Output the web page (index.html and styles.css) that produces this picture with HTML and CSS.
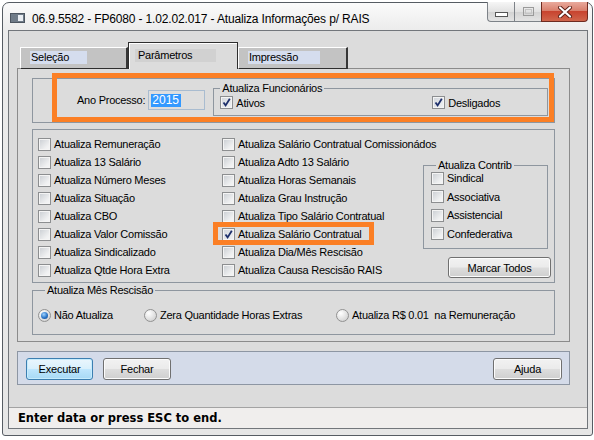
FILE: index.html
```html
<!DOCTYPE html>
<html lang="pt">
	<head>
		<meta charset="UTF-8">
		<title>Atualiza Informações p/ RAIS</title>
		<link rel="stylesheet" href="styles.css">
	</head>
	<body>
		<div class="window">
			<!-- Title bar -->
			<div class="titlebar">
				<svg class="app-icon" width="15" height="10" viewBox="0 0 15 10">
					<rect x="0.5" y="0.5" width="14" height="9" fill="#6f7b88" stroke="#4c5560"/>
					<rect x="8" y="2" width="5" height="6" fill="#e9edf2"/>
				</svg>
				<span class="title">06.9.5582 - FP6080 - 1.02.02.017 - Atualiza Informações p/ RAIS</span>
				<div class="caption">
					<span class="cap-btn cap-min">
						<svg width="13" height="5" viewBox="0 0 13 5"><rect x="0.5" y="0.5" width="12" height="4" fill="#fff" stroke="#555"/></svg>
					</span>
					<span class="cap-btn cap-max">
						<svg width="11" height="9" viewBox="0 0 11 9"><rect x="0.5" y="0.5" width="10" height="8" fill="none" stroke="#9a9a9a"/><rect x="2.5" y="2.5" width="6" height="4" fill="none" stroke="#c4c4c4"/></svg>
					</span>
					<span class="cap-btn cap-close">
						<svg width="16" height="12" viewBox="0 0 16 12">
							<path d="M3 1.5 L13 10.5 M13 1.5 L3 10.5" stroke="#5b1f16" stroke-width="4" stroke-linecap="round"/>
							<path d="M3 1.5 L13 10.5 M13 1.5 L3 10.5" stroke="#fff" stroke-width="2.2" stroke-linecap="round"/>
						</svg>
					</span>
				</div>
			</div>

			<div class="client">
				<!-- Tabs -->
				<div class="tabs">
					<div class="tab tab-first"><span class="tab-label">Seleção</span></div>
					<div class="tab tab-active"><span class="tab-label">Parâmetros</span></div>
					<div class="tab tab-last"><span class="tab-label">Impressão</span></div>
				</div>

				<div class="panel">
					<!-- Ano / funcionarios -->
					<div class="group top-group">
						<span class="ano-label">Ano Processo:</span>
						<span class="text-input"><span class="selected-text">2015</span></span>
						<fieldset class="func-box">
							<legend>Atualiza Funcionários</legend>
							<div class="func-row">
								<label class="check check-ativos"><span class="box box-checked"></span>Ativos</label>
								<label class="check"><span class="box box-checked"></span>Desligados</label>
							</div>
						</fieldset>
					</div>

					<!-- Options -->
					<div class="group checks">
						<div class="col">
							<label class="check"><span class="box"></span>Atualiza Remuneração</label>
							<label class="check"><span class="box"></span>Atualiza 13 Salário</label>
							<label class="check"><span class="box"></span>Atualiza Número Meses</label>
							<label class="check"><span class="box"></span>Atualiza Situação</label>
							<label class="check"><span class="box"></span>Atualiza CBO</label>
							<label class="check"><span class="box"></span>Atualiza Valor Comissão</label>
							<label class="check"><span class="box"></span>Atualiza Sindicalizado</label>
							<label class="check"><span class="box"></span>Atualiza Qtde Hora Extra</label>
						</div>
						<div class="col">
							<label class="check"><span class="box"></span>Atualiza Salário Contratual Comissionádos</label>
							<label class="check"><span class="box"></span>Atualiza Adto 13 Salário</label>
							<label class="check"><span class="box"></span>Atualiza Horas Semanais</label>
							<label class="check"><span class="box"></span>Atualiza Grau Instrução</label>
							<label class="check"><span class="box"></span>Atualiza Tipo Salário Contratual</label>
							<label class="check"><span class="box box-checked"></span>Atualiza Salário Contratual</label>
							<label class="check"><span class="box"></span>Atualiza Dia/Mês Rescisão</label>
							<label class="check"><span class="box"></span>Atualiza Causa Rescisão RAIS</label>
						</div>
						<div class="col col-contrib">
							<fieldset class="contrib-box">
								<legend>Atualiza Contrib</legend>
								<div class="contrib-rows">
									<label class="check"><span class="box"></span>Sindical</label>
									<label class="check"><span class="box"></span>Associativa</label>
									<label class="check"><span class="box"></span>Assistencial</label>
									<label class="check"><span class="box"></span>Confederativa</label>
								</div>
							</fieldset>
							<button class="btn btn-marcar">Marcar Todos</button>
						</div>
					</div>

					<!-- Rescisao -->
					<fieldset class="group radio-box">
						<legend>Atualiza Mês Rescisão</legend>
						<div class="radio-row">
							<label class="radio-item radio-w1"><span class="radio radio-on"></span>Não Atualiza</label>
							<label class="radio-item radio-w2"><span class="radio"></span>Zera Quantidade Horas Extras</label>
							<label class="radio-item"><span class="radio"></span>Atualiza R$ 0.01&nbsp; na Remuneração</label>
						</div>
					</fieldset>
				</div>

				<!-- Buttons -->
				<div class="btn-bar">
					<button class="btn btn-default">Executar</button>
					<button class="btn btn-fechar">Fechar</button>
					<button class="btn btn-ajuda">Ajuda</button>
				</div>

				<div class="status">Enter data or press ESC to end.</div>
			</div>

			<!-- highlight marks -->
			<div class="mark mark-top"></div>
			<div class="mark mark-salario"></div>
		</div>
	</body>
</html>
```

FILE: styles.css
```css
body {
	margin: 0;
	background: #fff;
	font-family: "Liberation Sans", Arial, sans-serif;
	font-size: 11px;
	letter-spacing: -0.25px;
	color: #000;
}

.window {
	position: relative;
	box-sizing: border-box;
	width: 591px;
	height: 434px;
	margin: 2px 0 0 2px;
	padding: 0 4px 6px 5px;
	border: 1px solid #565c63;
	border-radius: 7px 7px 3px 3px;
	background: linear-gradient(#fbfbfb, #ececec 26px, #e6e6e6);
	display: flex;
	flex-direction: column;
}

/* Title bar */
.titlebar {
	height: 27px;
	flex-shrink: 0;
	display: flex;
	align-items: flex-start;
}

.app-icon {
	margin: 10px 0 0 2px;
}

.title {
	margin: 9px 0 0 7px;
	font-size: 12px;
	letter-spacing: -0.15px;
	line-height: 14px;
	white-space: nowrap;
}

.caption {
	margin-left: auto;
	margin-top: -1px;
	display: flex;
}

.cap-btn {
	box-sizing: border-box;
	height: 20px;
	display: flex;
	align-items: center;
	justify-content: center;
	border: 1px solid #7d8288;
	border-top: none;
}

.cap-min {
	width: 27px;
	border-right: none;
	border-radius: 0 0 0 4px;
	background: linear-gradient(#f6f6f6, #e2e2e2 50%, #d2d2d2 51%, #e4e4e4);
}

.cap-min svg {
	margin-top: 6px;
}

.cap-max {
	width: 27px;
	border-right: none;
	background: linear-gradient(#f6f6f6, #e2e2e2 50%, #d2d2d2 51%, #e4e4e4);
}

.cap-close {
	width: 47px;
	border-color: #6e2b20;
	border-radius: 0 0 4px 0;
	background: linear-gradient(#e9aa9c, #d9806d 45%, #c8442f 50%, #d0664c);
}

/* Client area */
.client {
	flex: 1;
	min-height: 0;
	border: 1px solid #72767b;
	background: #dcdcdc;
	padding: 12px 17px 0 8px;
	display: flex;
	flex-direction: column;
}

.tabs {
	height: 25px;
	margin-left: 3px;
	display: flex;
	align-items: flex-end;
	flex-shrink: 0;
}

.tab {
	position: relative;
	z-index: 1;
	box-sizing: border-box;
	height: 22px;
	margin-bottom: -1px;
	padding: 3px 0 0 9px;
	background: #c3c3c3;
	border-top: 1px solid #fff;
	border-left: 1px solid #fff;
	border-right: 2px solid #363636;
	border-bottom: 1px solid #2e2e2e;
}

.tab-first {
	width: 108px;
}

.tab-last {
	width: 110px;
}

.tab-label {
	display: block;
	height: 13px;
	line-height: 13px;
	padding-left: 1px;
	background: #d5ddee;
}

.tab-first .tab-label {
	width: 56px;
}

.tab-last .tab-label {
	width: 71px;
}

.tab-active {
	width: 110px;
	height: 27px;
	padding: 6px 0 0 6px;
	background: #dcdcdc;
	border: 1px solid #2e2e2e;
	border-bottom: none;
	box-shadow: inset 1px 1px 0 #fff;
	z-index: 2;
}

.tab-active .tab-label {
	width: 78px;
	padding-left: 3px;
	background: #d1d1d1;
}

.panel {
	height: 274px;
	box-sizing: border-box;
	flex-shrink: 0;
	border: 1px solid #8b8b8b;
	padding: 9px 14px 0;
	display: flex;
	flex-direction: column;
}

.group {
	box-sizing: border-box;
	border: 1px solid #8e969f;
}

fieldset {
	margin: 0;
	padding: 0;
	min-width: 0;
}

legend {
	padding: 0 2px;
	line-height: 11px;
}

/* Ano processo row */
.top-group {
	height: 45px;
	display: flex;
	align-items: flex-start;
	padding-left: 44px;
}

.ano-label {
	margin-top: 11px;
	line-height: 20px;
}

.text-input {
	box-sizing: border-box;
	width: 57px;
	height: 20px;
	margin: 11px 0 0 3px;
	padding: 3px 0 0 2px;
	border: 1px solid #a9bcd0;
	background: #dedede;
}

.selected-text {
	display: inline-block;
	height: 13px;
	line-height: 13px;
	padding: 0 2px 0 1px;
	background: #3399ff;
	color: #fff;
	font-size: 12px;
	letter-spacing: 0;
}

.func-box {
	box-sizing: border-box;
	width: 335px;
	height: 33px;
	margin: 4px 0 0 8px;
	border: 1px solid #8e969f;
}

.func-box legend {
	margin-left: 6px;
}

.func-row {
	display: flex;
	padding-left: 6px;
}

.func-row .check {
	height: 17px;
}

.check-ativos {
	width: 212px;
}

/* Checkboxes */
.check {
	display: flex;
	align-items: center;
	gap: 3px;
	height: 18px;
	white-space: nowrap;
}

.box {
	flex-shrink: 0;
	box-sizing: border-box;
	width: 13px;
	height: 13px;
	border: 1px solid #8c8e90;
	background: linear-gradient(135deg, #c9cdd2, #eff0f1 70%, #f7f7f7);
	box-shadow: inset 0 0 0 1px #f4f4f4;
}

.box-checked {
	background: url("data:image/svg+xml,%3Csvg xmlns='http://www.w3.org/2000/svg' width='11' height='11'%3E%3Cpath d='M2.5 5.5 L4.6 8.4 L8.8 1.8' fill='none' stroke='%231d2f6b' stroke-width='1.8'/%3E%3C/svg%3E") center no-repeat, linear-gradient(135deg, #d2d6dc, #f2f3f4);
}

.checks {
	height: 154px;
	margin-top: 6px;
	padding: 5px 0 0 5px;
	display: grid;
	grid-template-columns: 184px 201px 125px;
}

.col-contrib {
	margin-top: 25px;
}

.contrib-box {
	box-sizing: border-box;
	height: 89px;
	border: 1px solid #8e969f;
	padding-left: 7px;
}

.contrib-box legend {
	margin-left: 5px;
}

.contrib-rows {
	margin-top: -2px;
}

.contrib-rows .check {
	height: 18.5px;
}

/* Buttons */
.btn {
	box-sizing: border-box;
	height: 22px;
	padding: 0;
	border: 1px solid #707070;
	border-radius: 3px;
	background: linear-gradient(#f2f2f2, #ebebeb 48%, #dddddd 52%, #cfcfcf);
	box-shadow: inset 0 0 0 1px #fcfcfc;
	font-family: "Liberation Sans", Arial, sans-serif;
	font-size: 11px;
	letter-spacing: -0.2px;
	color: #000;
}

.btn-marcar {
	width: 103px;
	height: 21px;
	margin: 8px 0 0 25px;
}

/* Radios */
.radio-box {
	height: 50px;
	margin-top: 2px;
	padding: 10px 0 0 5px;
}

.radio-box legend {
	margin-left: 7px;
}

.radio-row {
	display: flex;
}

.radio-item {
	display: flex;
	align-items: center;
	gap: 3px;
	height: 18px;
	white-space: nowrap;
}

.radio-w1 {
	width: 106px;
}

.radio-w2 {
	width: 192px;
}

.radio {
	flex-shrink: 0;
	box-sizing: border-box;
	width: 13px;
	height: 13px;
	border-radius: 50%;
	border: 1px solid #929292;
	background: radial-gradient(circle at 35% 30%, #ffffff, #d9d9d9 70%, #c4c4c4);
	display: flex;
	align-items: center;
	justify-content: center;
}

.radio-on::after {
	content: "";
	width: 7px;
	height: 7px;
	border-radius: 50%;
	background: radial-gradient(circle at 40% 35%, #9fd3ff, #2a75c8 55%, #123f80);
}

/* Bottom button bar */
.btn-bar {
	height: 34px;
	box-sizing: border-box;
	flex-shrink: 0;
	margin-top: 9px;
	padding: 6px 7px 0 8px;
	border: 1px solid #8d96a3;
	background: #d4dbe9;
	display: flex;
	gap: 10px;
}

.btn-default {
	width: 67px;
	border-color: #3c7fb1;
	background: linear-gradient(#eaf6fd, #d9f0fc 48%, #bee6fd 52%, #a7d9f5);
	box-shadow: inset 0 0 0 1px #c6ecfd;
}

.btn-fechar {
	width: 68px;
}

.btn-ajuda {
	width: 69px;
	margin-left: auto;
}

.status {
	flex: 1;
	margin: 22px -17px 0 -8px;
	padding-left: 9px;
	border-top: 1px solid #a3a3a3;
	background: #f0eeed;
	font-family: "DejaVu Sans", Verdana, sans-serif;
	font-weight: bold;
	font-size: 11.5px;
	letter-spacing: 0;
	line-height: 20px;
}

/* Highlight marks drawn over the dialog */
.mark {
	position: absolute;
	box-sizing: border-box;
	border: 5px solid #fb7f25;
}

.mark-top {
	left: 49px;
	top: 70px;
	width: 502px;
	height: 49px;
}

.mark-salario {
	left: 210px;
	top: 219px;
	width: 161px;
	height: 23px;
}
```
